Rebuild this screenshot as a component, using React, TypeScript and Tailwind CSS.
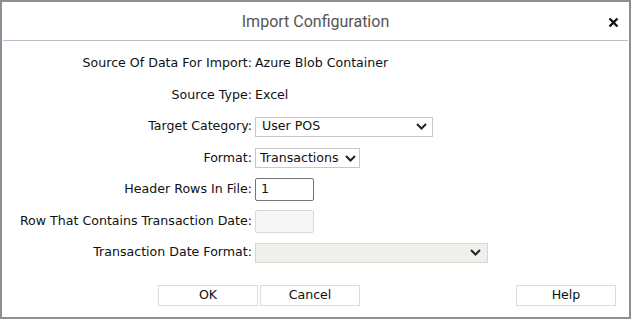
import React from 'react';

const labelFont = { fontFamily: '"DejaVu Sans", Verdana, sans-serif' };

function Chevron() {
  return (
    <svg width="11" height="7" viewBox="0 0 11 7" className="shrink-0">
      <polyline points="1,1 5.5,5.5 10,1" fill="none" stroke="#222" strokeWidth="2" />
    </svg>
  );
}

function Row({ label, h, children }: { label: string; h: string; children: React.ReactNode }) {
  return (
    <div className={`flex items-center ${h}`}>
      <div className="w-[251px] text-right pr-[1px] whitespace-nowrap">{label}</div>
      <div className="flex items-center pl-[2px]">{children}</div>
    </div>
  );
}

export default function App() {
  return (
    <div className="w-[631px] h-[319px] bg-white border-2 border-[#8c8f93] flex flex-col text-[12.6px] text-[#111]" style={labelFont}>
      <div className="relative h-[39px] flex items-center justify-center border-b border-[#b4bec9] mx-[1px]">
        <span className="text-[16px] text-[#555] pt-[1px]" style={{ fontFamily: 'Roboto, sans-serif' }}>Import Configuration</span>
        <svg width="11" height="11" viewBox="0 0 11 11" className="absolute right-[9px] top-[15px]">
          <path d="M1.5 1.5 L9.5 9.5 M9.5 1.5 L1.5 9.5" stroke="#111" strokeWidth="2.4" />
        </svg>
      </div>

      <div className="flex flex-col pt-[6px]">
        <Row label="Source Of Data For Import:" h="h-[33px]">
          <span>Azure Blob Container</span>
        </Row>
        <Row label="Source Type:" h="h-[31px]">
          <span>Excel</span>
        </Row>
        <Row label="Target Category:" h="h-[31px]">
          <div className="w-[178px] h-[20px] border border-[#c8c8c8] flex items-center justify-between pl-[6px] pr-[5px]">
            <span>User POS</span>
            <Chevron />
          </div>
        </Row>
        <Row label="Format:" h="h-[32px]">
          <div className="w-[105px] h-[20px] border border-[#c8c8c8] flex items-center justify-between pl-[4px] pr-[3px] whitespace-nowrap">
            <span>Transactions</span>
            <Chevron />
          </div>
        </Row>
        <Row label="Header Rows In File:" h="h-[31px]">
          <div className="w-[59px] h-[23px] border border-[#767676] rounded-[2px] flex items-center pl-[5px]">
            <span>1</span>
          </div>
        </Row>
        <Row label="Row That Contains Transaction Date:" h="h-[32px]">
          <div className="w-[59px] h-[23px] border border-[#d9d9d9] rounded-[2px] bg-[#f6f6f6]"></div>
        </Row>
        <Row label="Transaction Date Format:" h="h-[31px]">
          <div className="w-[233px] h-[20px] border border-[#d7d7d4] bg-[#efefec] flex items-center justify-end pr-[6px]">
            <Chevron />
          </div>
        </Row>
      </div>

      <div className="flex mt-[17px] pl-[156px] pr-[13px]">
        <button className="w-[100px] h-[21px] border border-[#dcdcdc] bg-white">OK</button>
        <button className="w-[100px] h-[21px] border border-[#dcdcdc] bg-white ml-[2px]">Cancel</button>
        <button className="w-[100px] h-[21px] border border-[#dcdcdc] bg-white ml-auto">Help</button>
      </div>
    </div>
  );
}
